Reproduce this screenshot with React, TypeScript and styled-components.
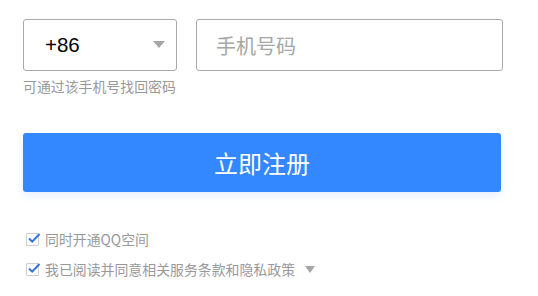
import React from 'react';
import styled, { createGlobalStyle } from 'styled-components';

const GlobalStyle = createGlobalStyle`
  html, body {
    margin: 0;
    padding: 0;
    background: #fff;
  }
  body {
    font-family: "Microsoft YaHei", "Noto Sans CJK SC", "Liberation Sans", sans-serif;
  }
`;

const Page = styled.div`
  width: 538px;
  height: 296px;
  box-sizing: border-box;
  padding: 19px 0 0 23px;
  display: flex;
  flex-direction: column;
`;

const PhoneRow = styled.div`
  display: flex;
  gap: 19px;
`;

const Field = styled.div<{ $width: number }>`
  width: ${p => p.$width}px;
  height: 52px;
  box-sizing: border-box;
  border: 1px solid #a9a9a9;
  border-radius: 3px;
  display: flex;
  align-items: center;
`;

const Code = styled.span`
  flex: 1;
  padding-left: 21px;
  font-family: "Liberation Sans", Arial, sans-serif;
  font-size: 20.5px;
  color: #000;
`;

const Caret = styled.span<{ $w: number; $h: number; $color: string }>`
  width: 0;
  height: 0;
  border-left: ${p => p.$w / 2}px solid transparent;
  border-right: ${p => p.$w / 2}px solid transparent;
  border-top: ${p => p.$h}px solid ${p => p.$color};
`;

const SelectCaret = styled(Caret)`
  margin-right: 11px;
  margin-top: -1px;
`;

const Placeholder = styled.span`
  padding-left: 19px;
  font-size: 20px;
  color: #a6a6a6;
`;

const Hint = styled.div`
  margin-top: 7px;
  font-size: 13.9px;
  line-height: 16px;
  color: #999;
`;

const Submit = styled.button`
  margin-top: 39px;
  width: 478px;
  height: 59px;
  border: none;
  border-radius: 3px;
  background: #3388ff;
  color: #fff;
  font-family: inherit;
  font-size: 24px;
  padding: 0;
  box-shadow: 0 4px 8px rgba(51, 136, 255, 0.12);
  cursor: pointer;
`;

const Options = styled.div`
  margin-top: 38px;
  display: flex;
  flex-direction: column;
  gap: 12px;
`;

const Option = styled.label`
  display: flex;
  align-items: center;
  height: 18px;
  padding-left: 3px;
  font-size: 13.9px;
  color: #999;
`;

const Box = styled.span`
  width: 13px;
  height: 13px;
  box-sizing: border-box;
  border: 1px solid #cfcfcf;
  border-radius: 1px;
  margin-right: 6px;
  position: relative;
  background: #fff;

  svg {
    position: absolute;
    left: 0;
    top: -2px;
  }
`;

const OptionCaret = styled(Caret)`
  margin-left: 10px;
`;

const Check = () => (
  <Box>
    <svg width="14" height="13" viewBox="0 0 14 13">
      <path d="M2 6.5 L5.2 9.6 L12.5 2" fill="none" stroke="#2f74d8" strokeWidth="2" />
    </svg>
  </Box>
);

const App: React.FC = () => (
  <Page>
    <GlobalStyle />
    <PhoneRow>
      <Field $width={154}>
        <Code>+86</Code>
        <SelectCaret $w={12} $h={7} $color="#a6a6a6" />
      </Field>
      <Field $width={307}>
        <Placeholder>手机号码</Placeholder>
      </Field>
    </PhoneRow>
    <Hint>可通过该手机号找回密码</Hint>
    <Submit>立即注册</Submit>
    <Options>
      <Option>
        <Check />
        同时开通QQ空间
      </Option>
      <Option>
        <Check />
        我已阅读并同意相关服务条款和隐私政策
        <OptionCaret $w={10} $h={7} $color="#a6a6a6" />
      </Option>
    </Options>
  </Page>
);

export default App;
